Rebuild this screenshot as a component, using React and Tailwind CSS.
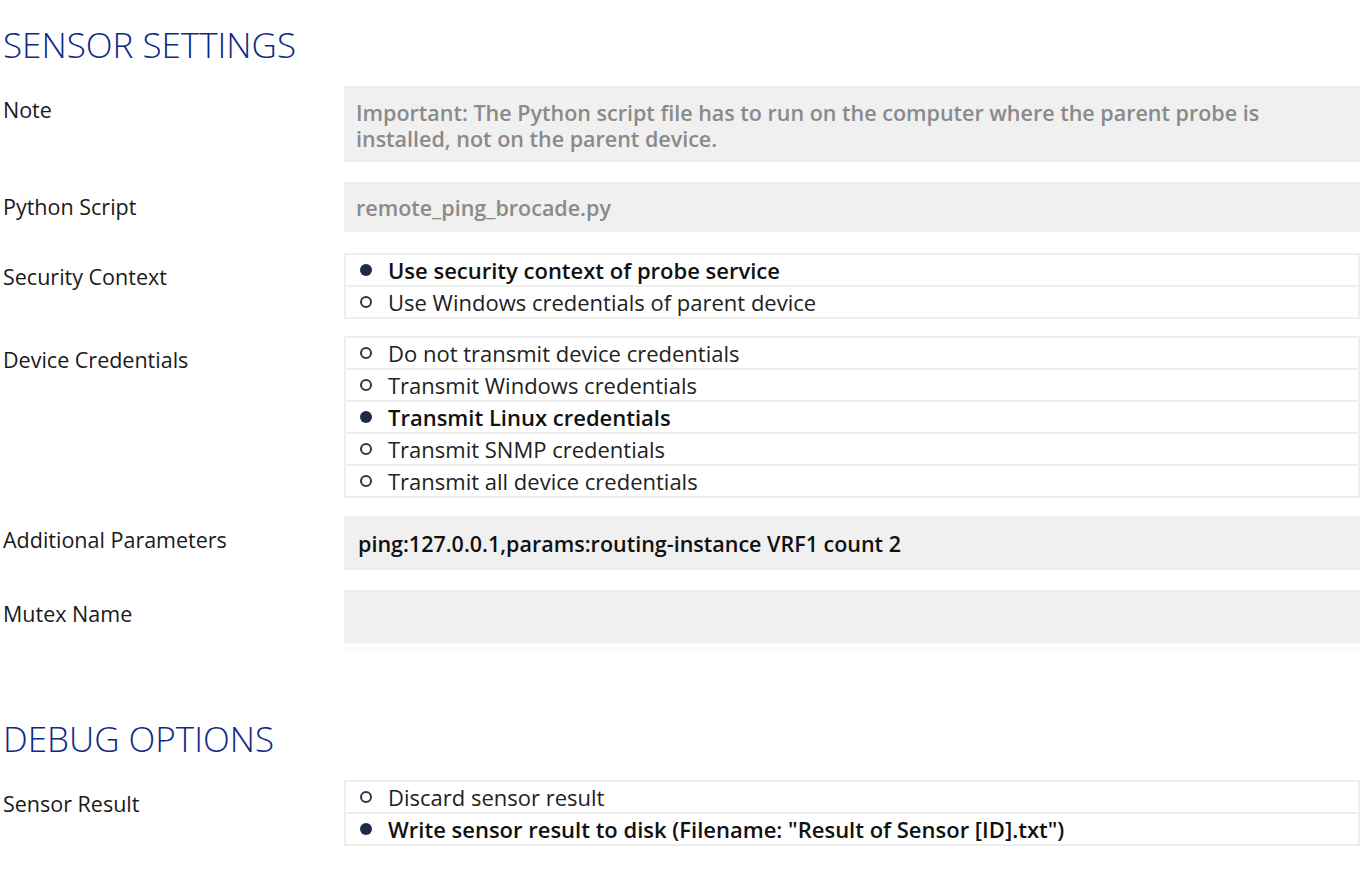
import React from "react";

const font = { fontFamily: '"Open Sans", "Noto Sans", "Liberation Sans", sans-serif' };

function Label({ pt, children }) {
  return (
    <div className={`w-[344px] shrink-0 pl-[3px] text-[21.5px] leading-[28px] text-[#1a1a1a] ${pt}`}>
      {children}
    </div>
  );
}

function RadioGroup({ options }) {
  return (
    <div className="flex-1 border-2 border-[#eeeeee]">
      {options.map((o, i) => (
        <div
          key={o.label}
          className={`box-content flex items-center h-[30px] pl-[14px] ${i > 0 ? "border-t-2 border-[#eeeeee]" : ""}`}
        >
          <span
            className={`w-[12px] h-[12px] rounded-full mr-[16px] shrink-0 ${
              o.checked ? "bg-[#1f2a4a]" : "border-2 border-[#2e3550]"
            }`}
          />
          <span className={`text-[22px] leading-[30px] ${o.checked ? "font-semibold text-[#111]" : "text-[#222]"}`}>
            {o.label}
          </span>
        </div>
      ))}
    </div>
  );
}

export default function App() {
  return (
    <div className="w-[1370px] h-[892px] bg-white pr-[10px]" style={font}>
      {/* Sensor settings */}
      <h2 className="pt-[22px] pl-[3px] text-[35px] font-light text-[#0d2b85] leading-[46px]">
        SENSOR SETTINGS
      </h2>

      <div className="flex mt-[18px]">
        <Label pt="pt-[10px]">Note</Label>
        <div className="flex-1 bg-[#f0f0f0] px-[12px] pt-[14px] pb-[10px] text-[21.5px] leading-[26px] font-semibold text-[#8a8a8a]">
          Important: The Python script file has to run on the computer where the parent probe is
          <br />
          installed, not on the parent device.
        </div>
      </div>

      <div className="flex mt-[20px]">
        <Label pt="pt-[11px]">Python Script</Label>
        <div className="flex-1 bg-[#f0f0f0] h-[50px] px-[12px] pt-[3px] flex items-center text-[21.5px] font-semibold text-[#8a8a8a]">
          remote_ping_brocade.py
        </div>
      </div>

      <div className="flex mt-[21px]">
        <Label pt="pt-[10px]">Security Context</Label>
        <RadioGroup
          options={[
            { label: "Use security context of probe service", checked: true },
            { label: "Use Windows credentials of parent device" },
          ]}
        />
      </div>

      <div className="flex mt-[17px]">
        <Label pt="pt-[10px]">Device Credentials</Label>
        <RadioGroup
          options={[
            { label: "Do not transmit device credentials" },
            { label: "Transmit Windows credentials" },
            { label: "Transmit Linux credentials", checked: true },
            { label: "Transmit SNMP credentials" },
            { label: "Transmit all device credentials" },
          ]}
        />
      </div>

      <div className="flex mt-[18px]">
        <Label pt="pt-[10px]">Additional Parameters</Label>
        <div className="flex-1 bg-[#f0f0f0] h-[54px] px-[14px] pt-[3px] flex items-center text-[21.5px] font-semibold text-[#111]">
          ping:127.0.0.1,params:routing-instance VRF1 count 2
        </div>
      </div>

      <div className="flex mt-[20px]">
        <Label pt="pt-[10px]">Mutex Name</Label>
        <div className="flex-1 bg-[#f0f0f0] h-[53px]" />
      </div>
      <div className="ml-[344px] h-[4px] mt-[4px] bg-[#fafafa]" />

      {/* Debug options */}
      <h2 className="mt-[65px] pl-[3px] text-[35px] font-light text-[#0d2b85] leading-[46px]">
        DEBUG OPTIONS
      </h2>

      <div className="flex mt-[18px]">
        <Label pt="pt-[10px]">Sensor Result</Label>
        <RadioGroup
          options={[
            { label: "Discard sensor result" },
            { label: 'Write sensor result to disk (Filename: "Result of Sensor [ID].txt")', checked: true },
          ]}
        />
      </div>
    </div>
  );
}
